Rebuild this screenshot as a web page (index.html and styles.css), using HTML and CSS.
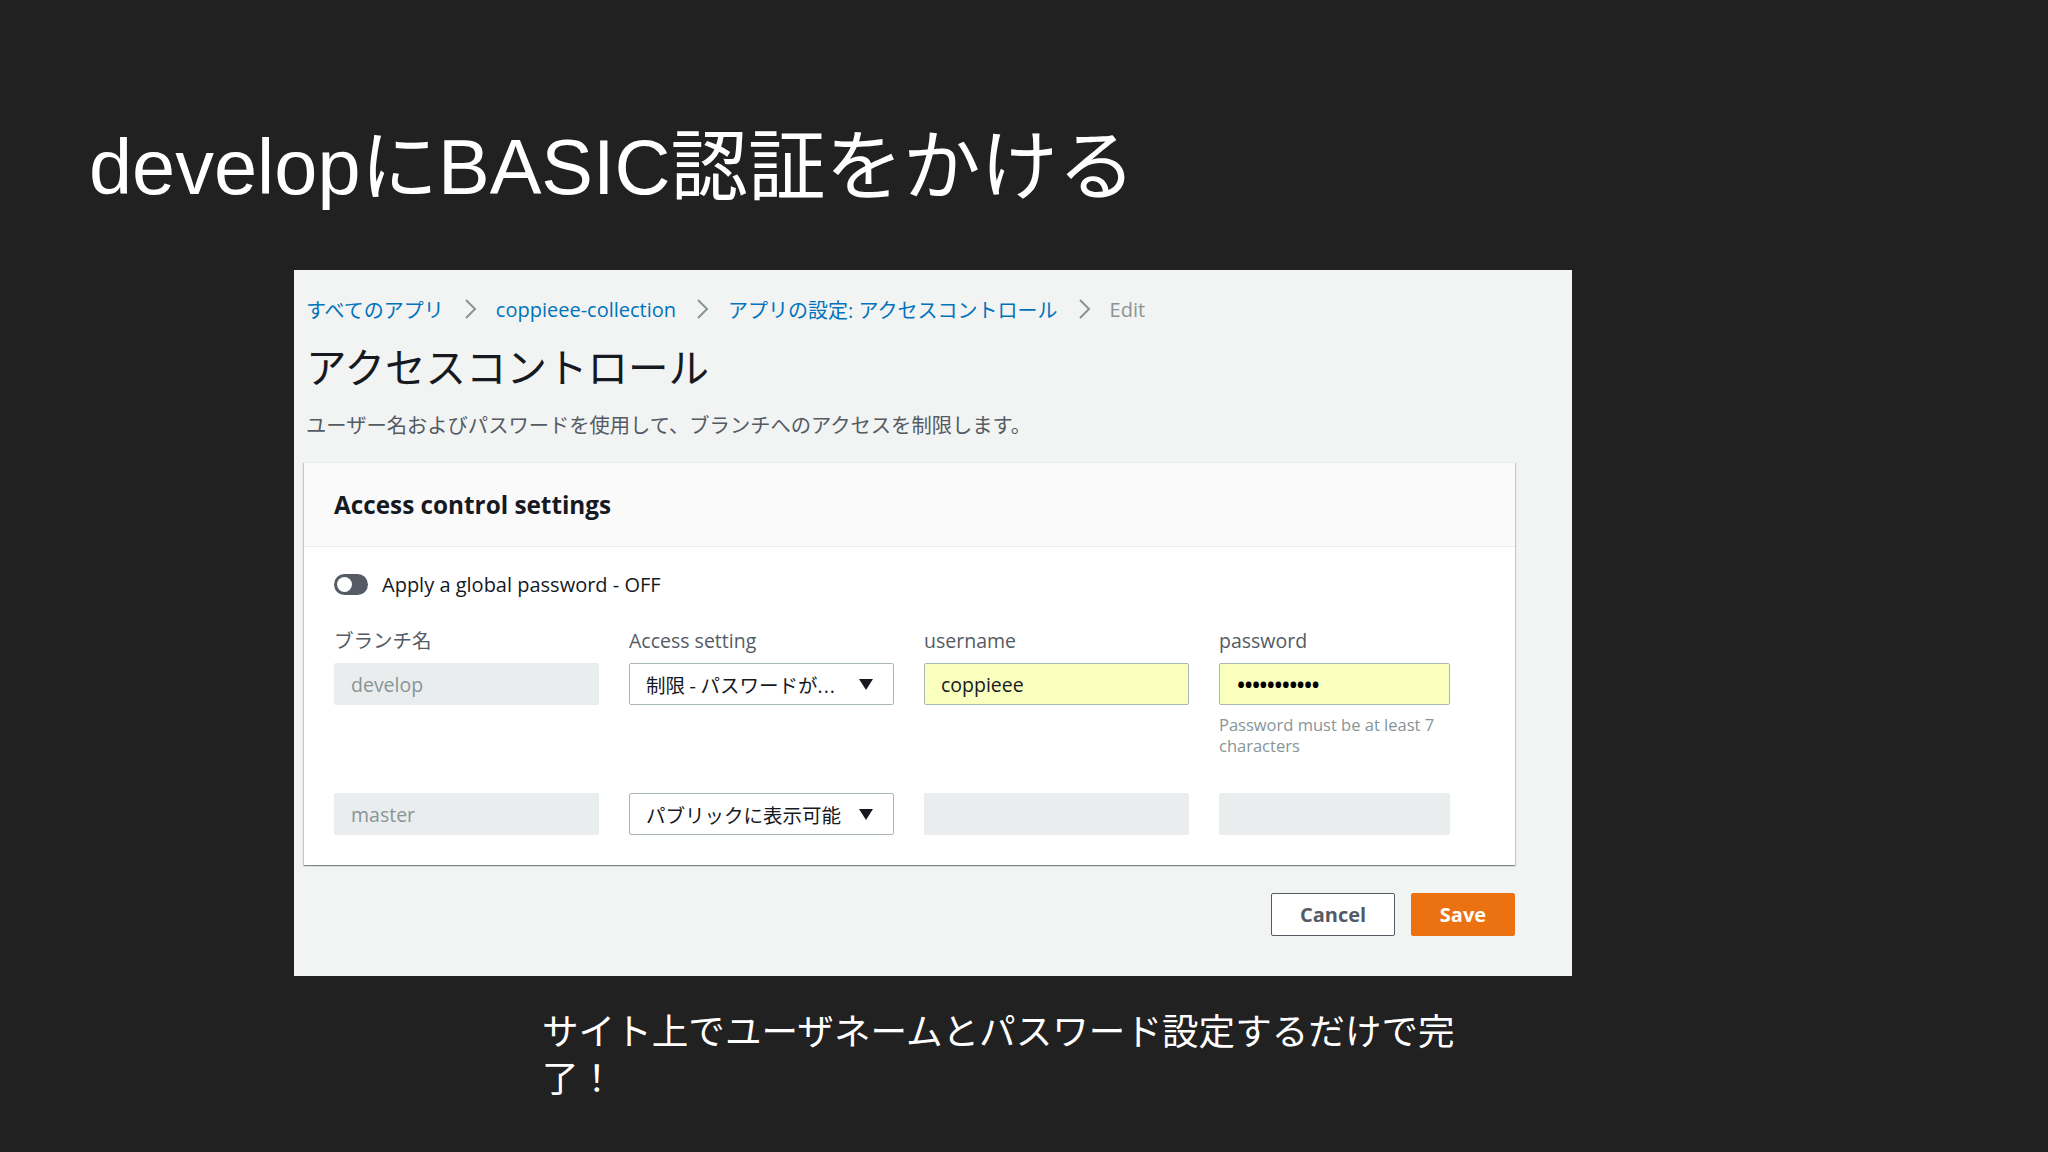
FILE: index.html
```html
<!DOCTYPE html>
<html>
<head>
<meta charset="utf-8">
<link rel="stylesheet" href="styles.css">
</head>
<body>
<div class="slide">
	<h1 class="slide-title">developにBASIC認証をかける</h1>

	<!--
		Amplify console screenshot
	-->
	<div class="shot">
		<div class="crumbs">
			<a href="#">すべてのアプリ</a>
			<svg class="chev" width="13" height="20" viewBox="0 0 13 20"><polyline points="2,1 11,10 2,19" fill="none" stroke="#879596" stroke-width="2"/></svg>
			<a href="#">coppieee-collection</a>
			<svg class="chev" width="13" height="20" viewBox="0 0 13 20"><polyline points="2,1 11,10 2,19" fill="none" stroke="#879596" stroke-width="2"/></svg>
			<a href="#">アプリの設定: アクセスコントロール</a>
			<svg class="chev" width="13" height="20" viewBox="0 0 13 20"><polyline points="2,1 11,10 2,19" fill="none" stroke="#879596" stroke-width="2"/></svg>
			<span class="crumb-current">Edit</span>
		</div>
		<h2 class="page-title">アクセスコントロール</h2>
		<p class="page-desc">ユーザー名およびパスワードを使用して、ブランチへのアクセスを制限します。</p>

		<div class="card">
			<div class="card-head">Access control settings</div>
			<div class="card-body">
				<div class="toggle-row">
					<span class="toggle"><span class="knob"></span></span>
					<span>Apply a global password - OFF</span>
				</div>
				<div class="fields">
					<div class="label">ブランチ名</div>
					<div class="label">Access setting</div>
					<div class="label">username</div>
					<div class="label">password</div>

					<div class="input disabled">develop</div>
					<div class="input select"><span class="sel-text">制限 - パスワードが<span class="dots">...</span></span><span class="caret"></span></div>
					<div class="input filled">coppieee</div>
					<div class="input filled pw">•••••••••••</div>

					<div></div>
					<div></div>
					<div></div>
					<div class="hint">Password must be at least 7 characters</div>

					<div class="input disabled">master</div>
					<div class="input select"><span class="sel-text">パブリックに表示可能</span><span class="caret"></span></div>
					<div class="input disabled"></div>
					<div class="input disabled"></div>
				</div>
			</div>
		</div>

		<div class="actions">
			<button class="btn">Cancel</button>
			<button class="btn primary">Save</button>
		</div>
	</div>

	<p class="caption">サイト上でユーザネームとパスワード設定するだけで完了！</p>
</div>
</body>
</html>
```

FILE: styles.css
```css
body
{
	margin: 0;
	background-color: #212121;
	color: #fff;
	font-family: "Liberation Sans", "Noto Sans CJK JP", sans-serif;
}
.slide
{
	width: 2048px;
	height: 1152px;
	overflow: hidden;
}
.slide-title
{
	margin: 119px 0 0 89px;
	font-size: 77.5px;
	line-height: 96px;
	font-weight: normal;
	white-space: nowrap;
}


/*
	Screenshot panel
*/
.shot
{
	width: 1209px;
	margin: 55px 0 0 294px;
	padding: 25px 57px 40px 12px;
	background-color: #f2f3f3;
	color: #16191f;
	font-family: "Open Sans", "Noto Sans CJK JP", sans-serif;
}
.crumbs
{
	display: flex;
	align-items: center;
	height: 28px;
	font-size: 20px;
}
.crumbs a
{
	color: #0073bb;
	text-decoration: none;
}
.chev
{
	margin: 0 19px 0 20px;
}
.crumb-current
{
	color: #879596;
}
.page-title
{
	margin: 17px 0 0 0;
	font-size: 40.5px;
	line-height: 52px;
	font-weight: normal;
	font-family: "Noto Sans CJK JP", sans-serif;
}
.page-desc
{
	margin: 18px 0 0 0;
	font-size: 20.3px;
	line-height: 28px;
	color: #545b64;
	font-family: "Noto Sans CJK JP", sans-serif;
}


/*
	Card
*/
.card
{
	width: 1211px;
	margin: 24px 0 0 -2px;
	background-color: #fff;
	border-top: 1px solid #eaeded;
	box-shadow: 0 1px 1px 0 rgba(0, 28, 36, 0.3), 1px 1px 1px 0 rgba(0, 28, 36, 0.15), -1px 1px 1px 0 rgba(0, 28, 36, 0.15);
}
.card-head
{
	height: 83px;
	padding-left: 30px;
	display: flex;
	align-items: center;
	background-color: #fafafa;
	border-bottom: 1px solid #eaeded;
	font-size: 24.3px;
	font-weight: bold;
}
.card-body
{
	padding: 26px 30px 30px 30px;
}
.toggle-row
{
	display: flex;
	align-items: center;
	height: 22px;
	font-size: 20px;
	color: #16191f;
}
.toggle
{
	width: 34px;
	height: 21px;
	margin-right: 14px;
	border-radius: 11px;
	background-color: #545b64;
	display: flex;
	align-items: center;
	padding-left: 3px;
	box-sizing: border-box;
}
.knob
{
	width: 15px;
	height: 15px;
	border-radius: 50%;
	background-color: #fff;
}
.fields
{
	display: grid;
	grid-template-columns: 265px 265px 265px 231px;
	grid-template-rows: 35px 42px 88px 42px;
	column-gap: 30px;
	margin-top: 33px;
}
.label
{
	font-size: 19.5px;
	line-height: 26px;
	color: #545b64;
}
.input
{
	box-sizing: border-box;
	height: 42px;
	padding: 0 16px;
	display: flex;
	align-items: center;
	font-size: 19.5px;
	border: 1px solid #aab7b8;
	border-radius: 2px;
	background-color: #fff;
	color: #16191f;
}
.input.disabled
{
	background-color: #eaeded;
	border-color: #eaeded;
	color: #879596;
}
.input.filled
{
	background-color: rgb(250, 255, 189);
}
.input.pw
{
	font-family: "Open Sans", sans-serif;
	font-size: 27px;
	letter-spacing: -2.7px;
	color: #000;
}
.input.select
{
	justify-content: space-between;
	font-family: "Noto Sans CJK JP", sans-serif;
	font-size: 19.5px;
	padding-right: 20px;
}
.dots
{
	font-family: "Open Sans", sans-serif;
	letter-spacing: 1px;
}
.caret
{
	width: 0;
	height: 0;
	border-left: 7px solid transparent;
	border-right: 7px solid transparent;
	border-top: 11px solid #16191f;
}
.hint
{
	padding-top: 9px;
	font-size: 16.5px;
	line-height: 21px;
	color: #879596;
}


/*
	Buttons
*/
.actions
{
	display: flex;
	justify-content: flex-end;
	gap: 16px;
	margin-top: 28px;
}
.btn
{
	height: 43px;
	width: 124px;
	border: 1px solid #545b64;
	border-radius: 2px;
	background-color: #fff;
	color: #545b64;
	font-family: "Open Sans", sans-serif;
	font-size: 20px;
	font-weight: bold;
}
.btn.primary
{
	width: 104px;
	background-color: #ec7211;
	border-color: #ec7211;
	color: #fff;
}


/*
	Caption
*/
.caption
{
	width: 935px;
	margin: 30px 0 0 542px;
	font-family: "Noto Sans CJK JP", sans-serif;
	font-size: 36.6px;
	line-height: 47px;
}
```
